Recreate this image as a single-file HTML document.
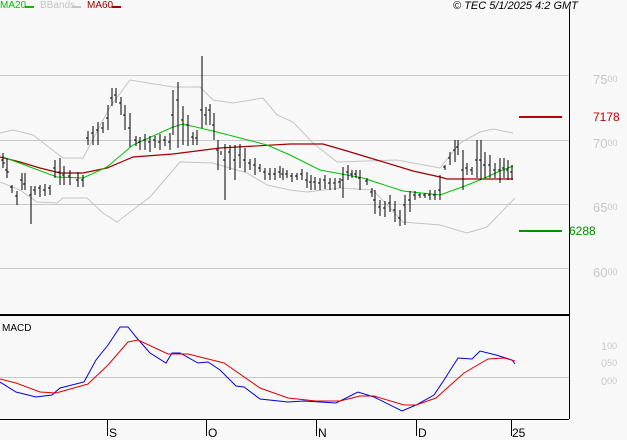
<!DOCTYPE html>
<html><head><meta charset="utf-8"><style>
html,body{margin:0;padding:0;background:#f8f8f8;}
body{width:627px;height:440px;overflow:hidden;position:relative;font-family:"Liberation Sans",sans-serif;}
.t{position:absolute;font-size:11px;line-height:12px;white-space:nowrap;}
.lbl{position:absolute;font-size:13px;color:#c8c8c8;white-space:nowrap;line-height:14px;}
.lbl sup{font-size:9px;vertical-align:top;position:relative;top:-1px;}
.d{position:absolute;height:2px;}
</style></head><body>
<div class="t" style="left:0;top:0;color:#00c000;font-size:10px">MA20</div><div class="d" style="left:25px;top:6px;width:9px;background:#00c000"></div>
<div class="t" style="left:40px;top:0;color:#c4c4c4;font-size:10px">BBands</div><div class="d" style="left:72px;top:6px;width:9px;background:#c4c4c4"></div>
<div class="t" style="left:87px;top:0;color:#a00000;font-size:10px">MA60</div><div class="d" style="left:112px;top:6px;width:9px;background:#a00000"></div>
<div class="t" style="left:453px;top:0;color:#000;font-style:italic">© TEC 5/1/2025 4:2 GMT</div>
<svg width="627" height="440" style="position:absolute;left:0;top:0" xmlns="http://www.w3.org/2000/svg">
<g stroke="#c8c8c8" stroke-width="1">
<line x1="0" y1="75.5" x2="569" y2="75.5"/><line x1="0" y1="140.5" x2="569" y2="140.5"/>
<line x1="0" y1="204.5" x2="569" y2="204.5"/><line x1="0" y1="268.5" x2="569" y2="268.5"/>
<line x1="0" y1="377.5" x2="569" y2="377.5"/>
</g>
<line x1="569.5" y1="9" x2="569.5" y2="419" stroke="#000"/>
<line x1="0" y1="315" x2="569" y2="315" stroke="#000" stroke-width="2"/>
<line x1="0" y1="419.5" x2="569" y2="419.5" stroke="#000"/>
<g stroke="#000"><line x1="107.5" y1="419" x2="107.5" y2="436"/><line x1="206.5" y1="419" x2="206.5" y2="436"/><line x1="316.5" y1="419" x2="316.5" y2="436"/><line x1="416.5" y1="419" x2="416.5" y2="436"/><line x1="511.5" y1="419" x2="511.5" y2="436"/></g>
<polyline fill="none" stroke="#c4c4c4" points="0,133 13,130 33,135 63,158 83,158 110,107 130,80 173,87 200,87 213,100 233,103 263,98 277,115 293,122 313,143 337,162 397,160 440,168 460,143 480,132 493,129 513,133"/>
<polyline fill="none" stroke="#c4c4c4" points="0,182 20,190 37,202 57,203 63,198 87,198 103,213 117,222 150,197 180,162 213,163 247,173 267,185 290,190 307,192 340,188 373,190 403,222 440,225 467,233 487,227 515,198"/>
<polyline fill="none" stroke="#a00000" stroke-width="1.2" points="0,157 20,162 40,168 60,173 83,173 107,168 133,157 173,154 220,148 290,144 323,144 347,151 380,161 413,171 440,177 447,179 513,179"/>
<polyline fill="none" stroke="#00c000" stroke-width="1" points="3,157 57,177 83,178 107,167 133,145 173,127 183,124 217,132 267,145 290,155 320,170 363,178 403,191 440,195 465,186 487,177 500,171 513,166"/>
<path fill="none" stroke="#000" stroke-width="1" d="M3,153v15M7,158v20M12,185v8M17,191v14M22,173v17M25,173v17M31,186v38M35,186v9M40,185v12M45,184v12M50,185v10M55,160v18M60,158v27M64,166v19M70,170v15M78,172v15M83,175v12M88,131v14M93,126v19M98,122v23M103,122v11M108,105v25M112,88v18M116,88v15M121,97v18M125,105v25M130,113v34M136,136v10M140,137v13M145,134v16M150,136v16M155,136v12M160,134v16M165,136v10M170,133v17M173,90v45M178,82v66M183,106v39M188,115v31M193,132v13M197,130v15M202,56v72M206,107v18M210,104v21M214,113v27M218,140v30M221,151v4M225,144v56M230,145v25M235,145v35M240,144v24M245,148v24M250,159v11M255,158v17M260,164v8M265,168v12M270,168v12M275,168v12M280,166v12M283,168v12M287,170v8M292,173v9M297,173v7M302,169v11M307,172v16M311,175v15M315,177v13M320,178v12M325,175v14M330,178v12M335,178v12M340,178v10M343,167v31M348,165v15M352,170v8M356,170v8M360,170v20M367,178v7M372,188v9M375,190v24M380,200v16M385,201v16M390,195v17M395,201v21M400,210v16M405,195v30M410,191v21M415,191v9M420,193v5M425,193v5M430,190v10M435,190v10M440,175v25M445,165v5M450,152v13M455,140v22M458,140v15M463,150v40M467,163v12M472,167v8M477,140v38M481,140v40M485,152v26M490,155v23M495,163v15M500,158v25M504,158v20M508,160v20M512,165v15"/>
<path fill="none" stroke="#000" stroke-width="1" d="M1,160h2M3,163h2M5,170h2M7,172h2M10,187h2M15,196h2M20,180h2M23,184h2M29,195h2M33,190h2M38,188h2M43,190h2M48,188h2M53,168h2M58,172h2M62,175h2M68,176h2M76,180h2M81,180h2M86,138h2M91,133h2M96,130h2M101,128h2M106,118h2M110,98h2M114,95h2M119,103h2M123,115h2M128,128h2M134,140h2M138,142h2M143,140h2M148,142h2M153,140h2M158,142h2M163,140h2M168,142h2M171,115h2M176,100h2M181,120h2M186,125h2M191,137h2M195,138h2M200,110h2M204,115h2M208,110h2M212,125h2M216,150h2M223,160h2M228,152h2M233,160h2M238,155h2M243,160h2M248,163h2M253,165h2M258,168h2M263,172h2M268,174h2M273,174h2M278,172h2M281,174h2M285,174h2M290,176h2M295,176h2M300,174h2M305,180h2M309,182h2M313,182h2M318,183h2M323,180h2M328,183h2M333,183h2M338,182h2M341,180h2M346,172h2M350,174h2M354,174h2M358,178h2M365,181h2M370,192h2M373,200h2M378,207h2M383,208h2M388,203h2M393,210h2M398,218h2M403,205h2M408,200h2M413,195h2M418,195h2M423,195h2M428,195h2M433,195h2M438,190h2M443,167h2M448,158h2M453,150h2M456,147h2M461,170h2M465,168h2M470,170h2M475,160h2M479,160h2M483,165h2M488,165h2M493,170h2M498,170h2M502,168h2M506,170h2M510,172h2"/>
<line x1="519" y1="117" x2="562" y2="117" stroke="#c00000" stroke-width="2"/>
<line x1="519" y1="231" x2="562" y2="231" stroke="#009000" stroke-width="2"/>
<polyline fill="none" stroke="#0000e0" stroke-width="1" points="0,382 16,392 36,397 52,395 60,388 84,382 96,360 108,345 120,327 128,327 136,337 150,353 166,363 172,353 180,353 198,363 208,362 220,370 236,386 244,387 260,399 288,402 304,401 336,403 358,392 374,397 402,411 416,405 434,395 444,380 458,358 472,359 480,351 496,355 512,360 515,364"/>
<polyline fill="none" stroke="#e00000" stroke-width="1" points="0,379 16,383 40,392 56,393 88,384 108,365 128,342 138,340 168,354 188,354 224,363 260,388 288,398 316,401 340,401 360,396 374,396 404,405 416,405 436,398 464,373 488,359 504,358 515,361"/>
</svg>
<div class="t" style="left:2px;top:323px;color:#000;font-size:10px">MACD</div>
<div class="t" style="left:109px;top:427px;font-size:12px">S</div>
<div class="t" style="left:208px;top:427px;font-size:12px">O</div>
<div class="t" style="left:318px;top:427px;font-size:12px">N</div>
<div class="t" style="left:418px;top:427px;font-size:12px">D</div>
<div class="t" style="left:512px;top:427px;font-size:12px">25</div>
<div class="lbl" style="left:593px;top:73px">75<sup>00</sup></div>
<div class="lbl" style="left:593px;top:137px">70<sup>00</sup></div>
<div class="lbl" style="left:593px;top:201px">65<sup>00</sup></div>
<div class="lbl" style="left:593px;top:266px">60<sup>00</sup></div>
<div class="lbl" style="left:593px;top:110px;color:#c00000;font-size:12px">7178</div>
<div class="lbl" style="left:569px;top:224px;color:#009000;font-size:12px">6288</div>
<div class="lbl" style="left:601px;top:340px;font-size:11px">1<sup>00</sup></div>
<div class="lbl" style="left:601px;top:357px;font-size:11px">0<sup>50</sup></div>
<div class="lbl" style="left:601px;top:375px;font-size:11px">0<sup>00</sup></div>
</body></html>
